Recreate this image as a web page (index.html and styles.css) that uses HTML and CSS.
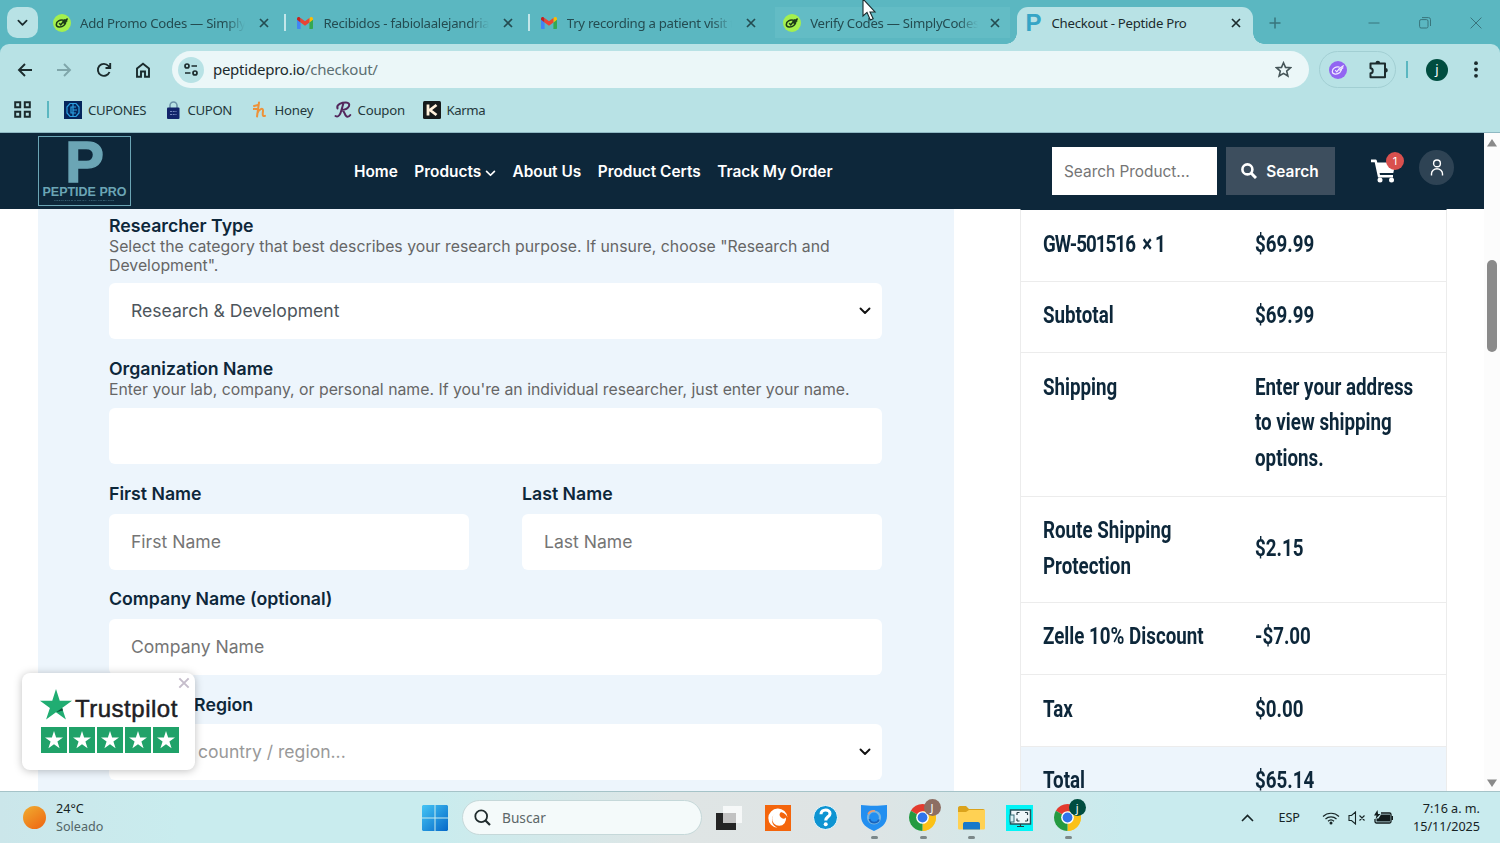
FILE: index.html
```html
<!DOCTYPE html>
<html lang="en">

<head>
  <meta charset="UTF-8">
  <meta name="viewport" content="width=device-width, initial-scale=1.0">
  <title>Checkout - Peptide Pro</title>
  <link rel="stylesheet" href="styles.css">
</head>

<body>

  <!-- shared icons -->
  <svg class="defs" width="0" height="0">
    <symbol id="close" viewBox="0 0 12 12"><path d="M2 2l8 8M10 2l-8 8" fill="none" stroke="currentColor" stroke-width="1.7"/></symbol>
    <symbol id="simply" viewBox="0 0 18 18">
      <circle cx="9" cy="9" r="9" fill="#a4f04e"/>
      <path d="M10.500 6.200C7 5.200 3.300 7.500 3.300 10.500c0 3.200 5 3.300 7.500 1 1.600-1.400 2.200-2.800 1.700-4.200M6.200 9.200l1.600 1.600 2.400-3 4.500-3.200M9.500 7.500l2.500-2M10.500 9.500l3.800-3" fill="none" stroke="#1d3a18" stroke-width="1.500"/>
    </symbol>
    <symbol id="gmail" viewBox="0 0 16 12">
      <path d="M0 2v9.300c0 .4.300.7.700.7H3.600V5.500z" fill="#4285f4"/>
      <path d="M16 2v9.300c0 .4-.3.700-.7.700h-2.900V5.500z" fill="#34a853"/>
      <path d="M12.400 1.500V5.500L16 2.800V1.700C16 .2 14.300-.5 13.200.4z" fill="#fbbc04"/>
      <path d="M0 1.700v1.100l3.600 2.700V1.500L2.800.4C1.700-.5 0 .2 0 1.700z" fill="#c5221f"/>
      <path d="M3.600 5.500v-4.500L8 4.300l4.400-3.300v4.500L8 8.800z" fill="#ea4335"/>
    </symbol>
    <symbol id="star" viewBox="0 0 20 20"><path d="M10 0l2.350 7.300H20l-6.200 4.500 2.400 7.300L10 14.600l-6.200 4.500 2.400-7.300L0 7.300h7.650z" fill="currentColor"/></symbol>
    <symbol id="chrome" viewBox="0 0 28 28">
      <path d="M14 14L1.900 7A14 14 0 0 1 26.100 7z" fill="#e33b2e"/>
      <path d="M14 14L26.100 7A14 14 0 0 1 14 28z" fill="#fbc116"/>
      <path d="M14 14L14 28A14 14 0 0 1 1.900 7z" fill="#249a41"/>
      <path d="M14 7.600H26.400A14 14 0 0 1 14 28L19.500 17.200z" fill="#fbc116"/>
      <circle cx="14" cy="14" r="6.600" fill="#fff"/>
      <circle cx="14" cy="14" r="5.100" fill="#2f74ea"/>
    </symbol>
    <symbol id="chevron" viewBox="0 0 12 8"><path d="M1.500 1.500L6 6l4.500-4.500" fill="none" stroke="currentColor" stroke-width="1.900" stroke-linecap="round" stroke-linejoin="round"/></symbol>
  </svg>

  <div class="tab-strip">
    <button class="tab-menu"><svg width="11" height="8"><use href="#chevron"/></svg></button>
    <div class="tab">
      <svg width="18" height="18"><use href="#simply"/></svg>
      <span class="tab-title">Add Promo Codes — Simply</span>
      <svg width="12" height="12"><use href="#close"/></svg>
    </div>
    <div class="tab divided">
      <svg width="18" height="12"><use href="#gmail"/></svg>
      <span class="tab-title">Recibidos - fabiolaalejandria</span>
      <svg width="12" height="12"><use href="#close"/></svg>
    </div>
    <div class="tab divided">
      <svg width="18" height="12"><use href="#gmail"/></svg>
      <span class="tab-title">Try recording a patient visit t</span>
      <svg width="12" height="12"><use href="#close"/></svg>
    </div>
    <div class="tab hovered">
      <svg width="18" height="18"><use href="#simply"/></svg>
      <span class="tab-title">Verify Codes — SimplyCodes</span>
      <svg width="12" height="12"><use href="#close"/></svg>
    </div>
    <div class="tab active">
      <b class="favicon-p">P</b>
      <span class="tab-title">Checkout - Peptide Pro</span>
      <svg width="12" height="12"><use href="#close"/></svg>
    </div>
    <svg class="new-tab" width="12" height="12" viewBox="0 0 12 12"><path d="M6 .5v11M.5 6h11" stroke="currentColor" stroke-width="1.500"/></svg>
    <div class="window-buttons">
      <svg width="12" height="12" viewBox="0 0 12 12"><path d="M.5 6h11"/></svg>
      <svg width="12" height="12" viewBox="0 0 12 12"><rect x=".6" y="2.600" width="8.400" height="8.400" rx="1.500"/><path d="M3 .6h6.500a2 2 0 0 1 2 2V9"/></svg>
      <svg width="12" height="12" viewBox="0 0 12 12"><path d="M.6.6l10.800 10.800M11.400.6L.6 11.400"/></svg>
    </div>
  </div>

  <div class="toolbar">
    <div class="nav-icons">
      <svg width="16" height="16" viewBox="0 0 16 16"><path d="M15 8H2M8 2L2 8l6 6"/></svg>
      <svg class="disabled" width="16" height="16" viewBox="0 0 16 16"><path d="M1 8h13M8 2l6 6-6 6"/></svg>
      <svg width="16" height="16" viewBox="0 0 16 16"><path d="M13.500 10A6 6 0 1 1 12.500 4l1.500 1.800M14.200 1v5H9.500"/></svg>
      <svg width="16" height="16" viewBox="0 0 16 16"><path d="M2 6.500L8 1.800l6 4.700v8.300h-4V9.500H6v5.300H2z"/></svg>
    </div>
    <div class="address-bar">
      <span class="site-info"><svg width="14" height="13" viewBox="0 0 14 13"><circle cx="3" cy="3" r="2"/><path d="M7.500 3H13M1 10h5.500"/><circle cx="11" cy="10" r="2"/></svg></span>
      <span class="url">peptidepro.io<i>/checkout/</i></span>
      <svg class="bookmark-star" width="17" height="17" viewBox="0 0 17 17"><path d="M8.500 1.800l2 4.600 5 .4-3.800 3.300 1.200 4.900-4.400-2.600L4.100 15l1.200-4.900L1.500 6.800l5-.4z"/></svg>
    </div>
    <div class="extensions">
      <svg width="18" height="18" viewBox="0 0 18 18"><circle cx="9" cy="9" r="9" fill="#9265f2"/><path d="M10.500 6.200C7 5.200 3.300 7.500 3.300 10.500c0 3.200 5 3.300 7.500 1 1.600-1.400 2.200-2.800 1.700-4.200M6.200 9.200l1.600 1.600 2.400-3 4.500-3.200M10.500 9.500l3.800-3" fill="none" stroke="#f2ebff" stroke-width="1.200"/></svg>
      <svg width="20" height="20" viewBox="0 0 20 20"><path d="M2.500 3.500H17v13.800H2.500v-4c3 0 3-5 0-5z" fill="none" stroke="#1b2b2d" stroke-width="2" stroke-linejoin="round"/><path d="M7.500 3a2.300 2.300 0 0 1 4.600 0zM17.500 8a2.300 2.300 0 0 1 0 4.600z" fill="#1b2b2d"/></svg>
    </div>
    <span class="toolbar-divider"></span>
    <span class="profile">j</span>
    <svg class="menu-dots" width="4" height="17" viewBox="0 0 4 17"><circle cx="2" cy="2.200" r="1.900"/><circle cx="2" cy="8.500" r="1.900"/><circle cx="2" cy="14.800" r="1.900"/></svg>
  </div>

  <div class="bookmarks">
    <svg class="apps" width="17" height="17" viewBox="0 0 17 17"><path d="M1.200 1.200h5v5h-5zM10.800 1.200h5v5h-5zM1.200 10.800h5v5h-5zM10.800 10.800h5v5h-5z"/></svg>
    <span class="bookmark-divider"></span>
    <a class="bookmark cupones"><svg width="18" height="18" viewBox="0 0 18 18"><path d="M0 0h18v18H0z" fill="#05255b"/><path d="M9 2.500H6L3 6v6l3 3.500h6l3-3.500V6l-3-3.500zM12 6H7v6h5M9 3v12M9 9h4" fill="none" stroke="#2a9fe0" stroke-width="1.200"/></svg>CUPONES</a>
    <a class="bookmark cupon"><svg width="13" height="18" viewBox="0 0 13 18"><path d="M3 8V4.500a3.500 3.500 0 0 1 7 0V8" fill="none" stroke="#6c93a9" stroke-width="1.600"/><rect y="6.500" width="12.500" height="11.500" rx="1" fill="#12246b"/><path d="M3 10.500h6.500M3 13.500h6.500" stroke="#7485bd" stroke-dasharray="2 .7"/></svg>CUPON</a>
    <a class="bookmark honey"><svg width="14" height="18" viewBox="0 0 14 18"><path d="M1 5l4-1M6 1.500L4 15.500M4.300 12.500C5.500 8 10.500 6 10 10c-.4 3-.8 6 2 4.800M.5 8l4-.3" fill="none" stroke="#ee9239" stroke-width="2" stroke-linecap="round"/></svg>Honey</a>
    <a class="bookmark coupon"><svg width="18" height="18" viewBox="0 0 18 18"><path d="M1.500 15c3 2 5-2 6-6L9.500 2M3.500 7.500C2 3 8 1.500 12 1.500c5.500 0 4 7-4.500 7.500 3.500 0 3 7 6 6.700 1.500-.1 2.300-.9 2.800-1.700" fill="none" stroke="#53275c" stroke-width="2" stroke-linecap="round"/></svg>Coupon</a>
    <a class="bookmark karma"><svg width="18" height="18" viewBox="0 0 18 18"><rect width="18" height="18" rx="1.500" fill="#161a1a"/><path d="M5 3.500v11M13.500 4L7 9l6.500 5" fill="none" stroke="#fff0da" stroke-width="2.800"/></svg>Karma</a>
  </div>

  <div class="viewport">
    <div class="page">
      <header class="site-header">
        <div class="logo">
          <span class="logo-letter">P</span>
          <span class="logo-name">PEPTIDE PRO</span>
          <span class="logo-tagline">PRECISION PURITY PERFORMANCE</span>
        </div>
        <nav class="main-nav">
          <a>Home</a>
          <a>Products <svg width="11" height="7"><use href="#chevron"/></svg></a>
          <a>About Us</a>
          <a>Product Certs</a>
          <a>Track My Order</a>
        </nav>
        <div class="search-input">Search Product...</div>
        <button class="search-button"><svg width="16" height="16" viewBox="0 0 16 16"><circle cx="6.400" cy="6.400" r="5" fill="none" stroke="#fff" stroke-width="2.600"/><path d="M10 10l5 5" stroke="#fff" stroke-width="3"/></svg>Search</button>
        <div class="cart">
          <svg width="26" height="24" viewBox="0 0 26 24"><path d="M0 .5h4.600c.6 0 1 .3 1.200.9l.5 2h18.200L22.300 14H8.600l.4 2H22v2.500H7L3.700 3.200H0z" fill="#fff"/><circle cx="9" cy="21" r="2.500" fill="#fff"/><circle cx="20.500" cy="21" r="2.500" fill="#fff"/></svg>
          <span class="cart-count">1</span>
        </div>
        <div class="account"><svg width="14" height="17" viewBox="0 0 14 17"><circle cx="7" cy="4.400" r="3.400"/><path d="M1.500 16.500v-1.800a5.500 5 0 0 1 11 0v1.800"/></svg></div>
      </header>

      <main class="checkout">
        <form class="details">
          <div class="field researcher">
            <label>Researcher Type</label>
            <p>Select the category that best describes your research purpose. If unsure, choose "Research and<br>Development".</p>
            <div class="control select">Research &amp; Development <svg width="12" height="8"><use href="#chevron"/></svg></div>
          </div>
          <div class="field organization">
            <label>Organization Name</label>
            <p>Enter your lab, company, or personal name. If you're an individual researcher, just enter your name.</p>
            <div class="control"></div>
          </div>
          <div class="name-row">
            <div class="field">
              <label>First Name</label>
              <div class="control placeholder">First Name</div>
            </div>
            <div class="field">
              <label>Last Name</label>
              <div class="control placeholder">Last Name</div>
            </div>
          </div>
          <div class="field">
            <label>Company Name (optional)</label>
            <div class="control placeholder">Company Name</div>
          </div>
          <div class="field">
            <label>Country / Region</label>
            <div class="control select country">Select a country / region... <svg width="12" height="8"><use href="#chevron"/></svg></div>
          </div>
        </form>

        <section class="order">
          <div class="row"><span class="cell product"><b>GW-501516 &nbsp;× 1</b></span><span class="cell"><b>$69.99</b></span></div>
          <div class="row"><span class="cell"><b>Subtotal</b></span><span class="cell"><b>$69.99</b></span></div>
          <div class="row shipping"><span class="cell"><b>Shipping</b></span><span class="cell"><b>Enter your address<br>to view shipping<br>options.</b></span></div>
          <div class="row protection"><span class="cell"><b>Route Shipping<br>Protection</b></span><span class="cell"><b>$2.15</b></span></div>
          <div class="row discount"><span class="cell"><b>Zelle 10% Discount</b></span><span class="cell"><b>-$7.00</b></span></div>
          <div class="row"><span class="cell"><b>Tax</b></span><span class="cell"><b>$0.00</b></span></div>
          <div class="row total"><span class="cell"><b>Total</b></span><span class="cell"><b>$65.14</b></span></div>
        </section>
      </main>
    </div>
    <div class="scrollbar">
      <svg width="10" height="8" viewBox="0 0 10 8"><path d="M5 0l5 7.500H0z" fill="#8a8a8a"/></svg>
      <span class="thumb"></span>
      <svg width="10" height="8" viewBox="0 0 10 8"><path d="M5 8L0 .5h10z" fill="#8a8a8a"/></svg>
    </div>

    <aside class="trustpilot">
      <svg class="dismiss" width="14" height="14"><use href="#close"/></svg>
      <div class="tp-brand"><svg width="32" height="32" viewBox="0 0 20 20"><use href="#star" width="20" height="20"/><path d="M13.900 11.800l.5 1.700-4.400 1.100z" fill="#0b5138"/></svg><span>Trustpilot</span></div>
      <div class="tp-stars">
        <i><svg width="18" height="18"><use href="#star"/></svg></i>
        <i><svg width="18" height="18"><use href="#star"/></svg></i>
        <i><svg width="18" height="18"><use href="#star"/></svg></i>
        <i><svg width="18" height="18"><use href="#star"/></svg></i>
        <i><svg width="18" height="18"><use href="#star"/></svg></i>
      </div>
    </aside>
  </div>

  <footer class="taskbar">
    <div class="weather"><span class="sun"></span><div><span>24°C</span><span class="muted">Soleado</span></div></div>
    <div class="apps-row">
      <svg width="26" height="26" viewBox="0 0 26 26"><defs><linearGradient id="win" x2="1" y2="1"><stop stop-color="#45c5f5"/><stop offset="1" stop-color="#0468c8"/></linearGradient></defs><path d="M1 0h11.500v12.500H0V1zM13.500 0H25l1 1v11.500H13.500zM0 13.500h12.500V26H1l-1-1zM13.500 13.500H26V25l-1 1H13.500z" fill="url(#win)"/></svg>
      <div class="task-search"><svg width="17" height="17" viewBox="0 0 17 17"><circle cx="7.200" cy="7.200" r="5.900" fill="none" stroke="#1f2b2d" stroke-width="1.800"/><path d="M11.500 11.500l4.500 4.500" stroke="#1f2b2d" stroke-width="2.200"/></svg>Buscar</div>
      <div class="task"><svg width="26" height="26" viewBox="0 0 26 26"><path d="M0 8h20v17H0z" fill="#242424"/><path d="M7 1h19v17H7z" fill="#fff" opacity=".72"/></svg></div>
      <div class="task"><svg width="26" height="26" viewBox="0 0 26 26"><path d="M0 0h26v26H0z" fill="#f4650c"/><path d="M22.500 12.500A9.600 9.600 0 1 0 12.500 22.700 8 8 0 1 1 22.500 12.500z" fill="#fff"/><path d="M21 12.500a7 7 0 1 1-5-5.500 3.500 3.500 0 1 0 5 5.500z" fill="#fff"/></svg></div>
      <div class="task"><svg width="25" height="25" viewBox="0 0 25 25"><circle cx="12.500" cy="12.500" r="12" fill="#0e94d2" stroke="#f4fbfc"/><path d="M8 9.300C8 3.500 17.200 3.700 17 8.700c-.1 3-4.200 3.300-4.300 6.800" fill="none" stroke="#fff" stroke-width="3.100"/><circle cx="12.700" cy="19.300" r="2" fill="#fff"/></svg></div>
      <div class="task running"><svg width="26" height="26" viewBox="0 0 26 26"><path d="M0 0c8 1 18 1 26 0v11c0 8-6 12-13 15C6 23 0 19 0 11z" fill="#238ff0"/><circle cx="13" cy="12.500" r="6" fill="none" stroke="#78b5e0" stroke-width="2.200"/><path d="M8.500 14a5 5 0 0 0 9.500.5" fill="none" stroke="#1763bd" stroke-width="1.800"/><path d="M7 9a7 7 0 0 1 7-3" fill="none" stroke="#f19a69" stroke-width="1.500"/></svg></div>
      <div class="task running"><svg width="27" height="27"><use href="#chrome"/></svg><span class="task-badge brown">J</span></div>
      <div class="task running"><svg width="27" height="25" viewBox="0 0 27 25"><path d="M0 3c0-1 .7-2 2-2h6l3 3h14c1 0 2 .7 2 2v4H0z" fill="#dba31c"/><path d="M0 7h8l3-2h16v18c0 1-.7 1.500-1.500 1.500h-24C.7 24.500 0 24 0 23z" fill="#ffd153"/><path d="M5 24.500V19c0-1.500 1-2 2-2h13c1 0 2 .7 2 2v5.500z" fill="#1879c9"/></svg></div>
      <div class="task"><svg width="27" height="26" viewBox="0 0 27 26"><path d="M0 0h27v26H0z" fill="#02f4f6"/><path d="M4.500 5h20v14h-20z" fill="#eef7fa" stroke="#24545c" stroke-width="1.500"/><path d="M11 21.500h7M14.500 19v3M11 7.500h2.500M11 7.500v2.500M21.500 7.500H19M21.500 7.500v2.500M11 16h2.500M11 16v-2.500M21.500 16H19M21.500 16v-2.500" fill="none" stroke="#263d43" stroke-width="1.200"/><rect x="4" y="10" width="4" height="7" fill="#d7f0f4" stroke="#356d76"/></svg></div>
      <div class="task running"><svg width="27" height="27"><use href="#chrome"/></svg><span class="task-badge green">j</span></div>
    </div>
    <div class="tray">
      <svg width="13" height="8" viewBox="0 0 13 8"><path d="M1 7l5.500-5.500L12 7" fill="none" stroke="#172526" stroke-width="1.600"/></svg>
      <span class="lang">ESP</span>
      <svg width="18" height="14" viewBox="0 0 18 14"><path d="M1 5.500a11.500 11.500 0 0 1 16 0M3.500 8a8 8 0 0 1 11 0M6 10.300a4.500 4.500 0 0 1 6 0" fill="none" stroke="#172526" stroke-width="1.200"/><circle cx="9" cy="12" r="1.500" fill="#172526"/></svg>
      <svg class="volume" width="18" height="14" viewBox="0 0 18 14"><path d="M1 4.500h2.500L7.500 1v12L3.500 9.500H1zM11.500 4.500l5 5M16.500 4.500l-5 5" fill="none" stroke="#172526" stroke-width="1.100"/></svg>
      <svg width="19" height="15" viewBox="0 0 19 15"><path d="M7 3h8.500a1.500 1.500 0 0 1 1.500 1.500v7a1.500 1.500 0 0 1-1.500 1.500h-13A1.500 1.500 0 0 1 1 11.500V9" fill="none" stroke="#111b1c" stroke-width="1.300"/><path d="M7 4.500h9v7H2.500V8.500h2zM17.500 6H19v4h-1.500zM3.500 0L0 5.500h2.500L1.500 9 6.500 4H4z" fill="#111b1c"/></svg>
      <div class="clock"><span>7:16 a. m.</span><span>15/11/2025</span></div>
    </div>
  </footer>

  <svg class="cursor" width="15" height="22" viewBox="0 0 15 22"><path d="M1 -1v17l4-3.600 3.300 7.600 2.900-1.300L8 12h5z" fill="#fff" stroke="#1a2a2c" stroke-width="1.100"/></svg>

</body>

</html>
```
FILE: styles.css
```css
* {
  box-sizing: border-box;
}

body {
  margin: 0;
  width: 1500px;
  height: 843px;
  overflow: hidden;
  position: relative;
  display: flex;
  flex-direction: column;
  font-family: "Noto Sans", sans-serif;
  background-color: #5bb7c1;
}

svg {
  flex: none;
  display: block;
}

button {
  border: 0;
  padding: 0;
  font: inherit;
}

.defs {
  position: absolute;
}

/* Browser tabs */
.tab-strip {
  height: 44px;
  flex: none;
  display: flex;
  align-items: center;
  padding: 1px 18px 0 7px;
  color: #244c51;
}

.tab-menu {
  width: 31px;
  height: 31px;
  border-radius: 10px;
  background-color: #b8e2e5;
  color: #1b2b2d;
  display: flex;
  align-items: center;
  justify-content: center;
  margin-right: 3px;
}

.tab {
  width: 243.400px;
  height: 31px;
  flex: none;
  display: flex;
  align-items: center;
  padding: 0 14px 0 12px;
  position: relative;
  font-size: 13.200px;
  letter-spacing: -0.280px;
}

.tab-title {
  flex: 1;
  margin: 0 13px 0 9px;
  white-space: nowrap;
  overflow: hidden;
  mask-image: linear-gradient(to right, #000 88%, transparent);
}

.divided {
  background: linear-gradient(#c3e6e9, #c3e6e9) 0 50% / 2px 17px no-repeat;
}

.hovered {
  background: linear-gradient(#63bcc5, #63bcc5) 4px 0 / 235px 31px no-repeat;
}

.hovered .tab-title {
  margin-right: 11px;
}

.active {
  width: 236px;
  height: 37px;
  margin: 6px 0 0 2px;
  padding: 0 11px 5px 9px;
  border-radius: 11px 11px 0 0;
  background-color: #b8e2e5;
  color: #1b2b2d;
}

.active::before,
.active::after {
  content: "";
  position: absolute;
  bottom: 0;
  width: 11px;
  height: 11px;
}

.active::before {
  left: -11px;
  background: radial-gradient(circle at 0 0, transparent 10.500px, #b8e2e5 11px);
}

.active::after {
  right: -11px;
  background: radial-gradient(circle at 100% 0, transparent 10.500px, #b8e2e5 11px);
}

.active .tab-title {
  mask-image: none;
  margin-left: 10px;
}

.favicon-p {
  width: 16px;
  font: bold 24px/24px "Liberation Sans", sans-serif;
  color: #36a5c6;
}

.new-tab {
  margin-left: 16px;
  color: #39757c;
}

.window-buttons {
  margin-left: auto;
  display: flex;
  gap: 39px;
  fill: none;
  stroke: #39757c;
}

/* Address bar row */
.toolbar {
  height: 51px;
  flex: none;
  display: flex;
  align-items: center;
  padding: 0 22px 0 17px;
  background-color: #b8e2e5;
  border-radius: 9px 9px 0 0;
}

.nav-icons {
  display: flex;
  gap: 23.300px;
  fill: none;
  stroke: #1b2b2d;
  stroke-width: 1.900;
}

.nav-icons .disabled {
  stroke: #7fa6aa;
}

.address-bar {
  width: 1137px;
  height: 37px;
  margin-left: 21px;
  padding: 0 17px 0 6px;
  border-radius: 19px;
  background-color: #ebf7f8;
  display: flex;
  align-items: center;
}

.site-info {
  width: 26px;
  height: 26px;
  border-radius: 50%;
  background-color: #b8e2e5;
  display: flex;
  align-items: center;
  justify-content: center;
  fill: none;
  stroke: #1b2b2d;
  stroke-width: 1.700;
}

.url {
  margin: -2px 0 0 9px;
  font-size: 15px;
  letter-spacing: -0.230px;
  color: #1b2b2d;
}

.url i {
  font-style: normal;
  color: #5c6f72;
}

.bookmark-star {
  margin-left: auto;
  fill: none;
  stroke: #455558;
  stroke-width: 1.600;
}

.extensions {
  width: 77px;
  height: 37px;
  margin-left: 10px;
  padding: 0 7px 0 9px;
  border: 1px solid #a2cfd3;
  border-radius: 19px;
  display: flex;
  align-items: center;
  justify-content: space-between;
}

.toolbar-divider,
.bookmark-divider {
  width: 2px;
  height: 17px;
  background-color: #5bb7c1;
}

.toolbar-divider {
  margin-left: 10px;
}

.profile {
  width: 22px;
  height: 22px;
  margin-left: 18px;
  border-radius: 50%;
  background-color: #004d40;
  color: #fff;
  font-size: 13px;
  line-height: 20px;
  text-align: center;
}

.menu-dots {
  margin-left: auto;
  fill: #1b2b2d;
}

.bookmarks {
  height: 38px;
  flex: none;
  display: flex;
  align-items: center;
  padding: 0 0 8px 14px;
  background-color: #b8e2e5;
  border-bottom: 1px solid #8fb9c3;
  color: #24383b;
  font-size: 13.200px;
}

.bookmark-divider {
  margin: 0 15px 0 16px;
}

.apps {
  fill: none;
  stroke: #1b2b2d;
  stroke-width: 2;
}

.bookmark {
  display: flex;
  align-items: center;
  gap: 6px;
  white-space: nowrap;
}

.cupones {
  width: 102.500px;
  letter-spacing: -0.400px;
}

.cupon {
  width: 86px;
  gap: 8px;
  letter-spacing: -0.350px;
}

.honey {
  width: 81px;
  gap: 8px;
  letter-spacing: -0.200px;
}

.coupon {
  width: 89px;
  letter-spacing: -0.200px;
}

.karma {
  letter-spacing: -0.400px;
}

/* Web page */
.viewport {
  height: 658px;
  flex: none;
  display: flex;
  position: relative;
  overflow: hidden;
  background-color: #fff;
}

.page {
  width: 1484px;
  font-family: Inter, sans-serif;
  color: #0d273a;
}

.site-header {
  height: 76px;
  display: flex;
  align-items: center;
  padding-left: 38px;
  background-color: #0d273a;
  color: #fff;
  font-weight: 600;
}

.logo {
  width: 93px;
  height: 70px;
  border: 1px solid #6ba5b5;
  display: flex;
  flex-direction: column;
  align-items: center;
  color: #6ba5b5;
  font-family: "Liberation Sans", sans-serif;
  font-weight: bold;
  white-space: nowrap;
}

.logo-letter {
  font-size: 58px;
  line-height: 49px;
  -webkit-text-stroke: 1.500px #6ba5b5;
}

.logo-name {
  font-size: 12.500px;
  line-height: 13px;
}

.logo-tagline {
  font-size: 2.500px;
  line-height: 4px;
  letter-spacing: 0.600px;
  opacity: 0.700;
}

.main-nav {
  width: 698px;
  margin-left: 223px;
  display: flex;
  gap: 16.500px;
  font-size: 15.400px;
  white-space: nowrap;
}

.main-nav svg {
  display: inline-block;
}

.search-input {
  width: 165px;
  height: 48px;
  padding-left: 12px;
  background-color: #fff;
  color: #757575;
  font-size: 15.400px;
  font-weight: 400;
  line-height: 50px;
}

.search-button {
  width: 109px;
  height: 48px;
  margin-left: 9px;
  padding-right: 1px;
  display: flex;
  align-items: center;
  justify-content: center;
  gap: 9px;
  background-color: #3d4e5e;
  color: #fff;
  font-size: 15.400px;
}

.cart {
  margin-left: 36px;
  position: relative;
}

.cart-count {
  position: absolute;
  left: 15px;
  top: -7px;
  width: 18px;
  height: 18px;
  border-radius: 50%;
  background-color: #d9504e;
  font-size: 11px;
  font-weight: 400;
  line-height: 18px;
  text-align: center;
}

.account {
  width: 35px;
  height: 35px;
  margin: -7px 0 0 22px;
  border-radius: 50%;
  background-color: #2e4354;
  display: flex;
  align-items: center;
  justify-content: center;
  fill: none;
  stroke: #fff;
  stroke-width: 1.400;
}

.checkout {
  display: flex;
  align-items: flex-start;
  padding-left: 38px;
}

.details {
  width: 916px;
  height: 582px;
  padding: 7px 72px 0 71px;
  background-color: #edf5fc;
}

.field {
  height: 105.400px;
}

.researcher {
  height: 143px;
}

.organization {
  height: 125px;
}

.field label {
  display: block;
  height: 20px;
  font-size: 17.720px;
  font-weight: 600;
  line-height: 20px;
}

.field p {
  margin: 2px 0 0;
  font-size: 15.820px;
  line-height: 18.700px;
  color: #666;
  white-space: nowrap;
}

.control {
  height: 56px;
  margin-top: 9.700px;
  padding: 0 22px;
  border-radius: 6px;
  background-color: #fff;
  font-size: 17.570px;
  line-height: 56px;
  color: #4d555c;
}

.field p + .control {
  margin-top: 8px;
}

.select {
  display: flex;
  align-items: center;
  justify-content: space-between;
  padding-right: 11px;
}

.select svg {
  color: #111;
}

.placeholder {
  color: #757575;
}

.country {
  padding-left: 17.500px;
  color: #999;
}

.name-row {
  display: grid;
  grid-template-columns: 360px 360px;
  gap: 53px;
}

/* Order summary */
.order {
  width: 427px;
  margin-left: 66px;
  border: 1px solid #ececec;
  border-top: 1px solid #0d273a;
  font-family: Roboto, sans-serif;
  font-size: 24.300px;
  line-height: 35.500px;
}

.row {
  display: grid;
  grid-template-columns: 212px 1fr;
  align-items: center;
  padding: 15.500px 0 19.500px 22px;
  border-bottom: 1px solid #ececec;
}

.shipping {
  align-items: start;
  padding-bottom: 20.500px;
}

.protection {
  padding-bottom: 18.500px;
}

.discount {
  padding-bottom: 20.500px;
}

.total {
  background-color: #edf5fc;
}

.cell b {
  display: inline-block;
  font-weight: 700;
  white-space: nowrap;
  transform: scaleX(0.772);
  transform-origin: left;
}

.product b {
  letter-spacing: -1.250px;
}

.scrollbar {
  width: 16px;
  display: flex;
  flex-direction: column;
  align-items: center;
  padding: 6px 0 4px;
  background-color: #fcfcfc;
}

.thumb {
  width: 10px;
  height: 92px;
  margin: 113px 0 auto;
  border-radius: 5px;
  background-color: #8a8a8a;
}

/* Floating review badge */
.trustpilot {
  position: absolute;
  left: 22px;
  top: 540px;
  width: 173px;
  height: 97px;
  padding: 16px 0 0 18px;
  border-radius: 8px;
  background-color: #fff;
  box-shadow: 0 1px 8px rgba(0, 0, 0, 0.250);
}

.dismiss {
  position: absolute;
  right: 4px;
  top: 3px;
  color: #c5bdcb;
}

.tp-brand {
  display: flex;
  color: #20ad72;
}

.tp-brand span {
  margin: 4px 0 0 3px;
  color: #202024;
  font: 24px/32px "Liberation Sans", sans-serif;
  letter-spacing: 0.500px;
  -webkit-text-stroke: 0.500px #202024;
}

.tp-stars {
  display: flex;
  gap: 2px;
  margin: 2px 0 0 1px;
}

.tp-stars i {
  width: 26px;
  height: 26px;
  display: flex;
  align-items: center;
  justify-content: center;
  background-color: #20a269;
  color: #fff;
}

/* Windows taskbar */
.taskbar {
  height: 52px;
  flex: none;
  display: flex;
  align-items: center;
  border-top: 1px solid #a5c3c8;
  background: linear-gradient(to right, #cbe6ea 0, #c9ecee 12%, #c9ecee 29%, #dfe5e5 45%, #dfe4e4 57%, #c9ebee 75%, #c9ebee);
  font-size: 12.600px;
  color: #162324;
}

.weather {
  width: 422px;
  padding-left: 23px;
  display: flex;
  align-items: center;
  gap: 10px;
}

.weather div,
.clock {
  display: flex;
  flex-direction: column;
  line-height: 17.500px;
}

.sun {
  width: 23px;
  height: 23px;
  border-radius: 50%;
  background: linear-gradient(145deg, #f0ae30, #ee6211);
}

.muted {
  color: #526567;
}

.apps-row {
  display: flex;
  align-items: center;
}

.task-search {
  width: 240px;
  height: 35px;
  margin: 0 3px 0 14px;
  padding-left: 11px;
  border: 1px solid #c5d8d9;
  border-radius: 18px;
  background-color: #f4fafa;
  display: flex;
  align-items: center;
  gap: 11px;
  font-size: 13.700px;
  color: #5c6768;
}

.task {
  width: 48.400px;
  height: 50px;
  display: flex;
  align-items: center;
  justify-content: center;
  position: relative;
}

.running::after {
  content: "";
  position: absolute;
  bottom: 4px;
  left: 21px;
  width: 7px;
  height: 3px;
  border-radius: 2px;
  background-color: #7c8889;
}

.task-badge {
  position: absolute;
  left: 25px;
  top: 6px;
  width: 17px;
  height: 17px;
  border-radius: 50%;
  color: #fff;
  font-size: 11px;
  line-height: 17px;
  text-align: center;
}

.brown {
  background-color: #8d6e63;
}

.green {
  background-color: #004d40;
}

.tray {
  margin-left: auto;
  padding-right: 20px;
  display: flex;
  align-items: center;
}

.lang {
  margin: 0 22px 0 24px;
}

.volume {
  margin: 0 8px;
}

.clock {
  width: 87px;
  text-align: right;
}

.cursor {
  position: absolute;
  left: 862px;
  top: 0;
}
```
